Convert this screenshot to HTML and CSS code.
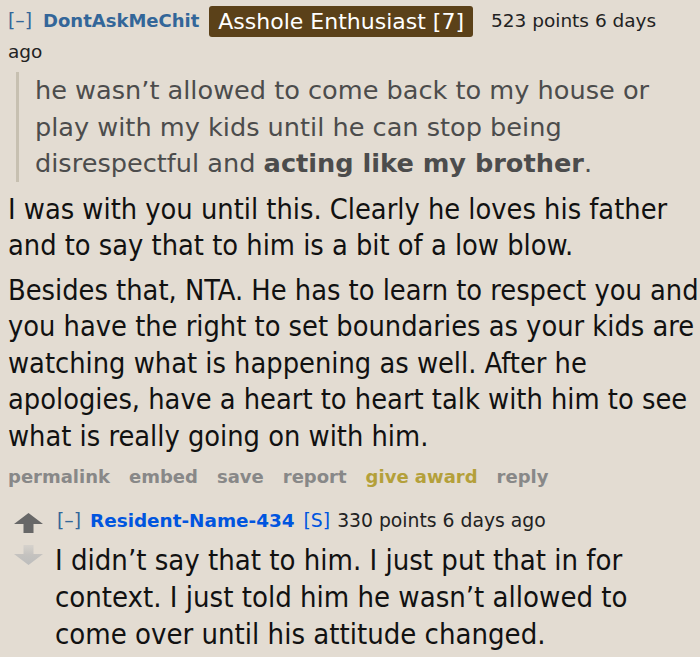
FILE: index.html
```html
<!DOCTYPE html>
<html>
<head>
<meta charset="utf-8">
<link rel="stylesheet" href="styles.css">
</head>
<body>
<div class="comment">
  <p class="tagline"><span class="expand">[–]</span><span class="author">DontAskMeChit</span><span class="flair">Asshole Enthusiast [7]</span><span class="score">523 points 6 days ago</span></p>
  <blockquote class="quote">
    he wasn’t allowed to come back to my house or play with my kids until he can stop being disrespectful and <strong>acting like my brother</strong>.
  </blockquote>
  <div class="md">
    <p>I was with you until this. Clearly he loves his father and to say that to him is a bit of a low blow.</p>
    <p>Besides that, NTA. He has to learn to respect you and you have the right to set boundaries as your kids are watching what is happening as well. After he apologies, have a heart to heart talk with him to see what is really going on with him.</p>
  </div>
  <ul class="buttons">
    <li>permalink</li>
    <li>embed</li>
    <li>save</li>
    <li>report</li>
    <li class="award">give award</li>
    <li>reply</li>
  </ul>
  <div class="child">
    <div class="arrows">
      <svg class="arrow up" width="29" height="20" viewBox="0 0 29 20"><path d="M14.5 0 L29 11 L19.5 11 L19.5 20 L9.5 20 L9.5 11 L0 11 Z"/></svg>
      <svg class="arrow down" width="29" height="20" viewBox="0 0 29 20">
        <defs>
          <linearGradient id="dg" x1="0" y1="0" x2="0" y2="1">
            <stop offset="0" stop-color="#d6d2cc"/>
            <stop offset="0.5" stop-color="#c4c2bf"/>
            <stop offset="1" stop-color="#bdbdbd"/>
          </linearGradient>
        </defs>
        <path fill="url(#dg)" d="M14.5 20 L29 9 L19.5 9 L19.5 0 L9.5 0 L9.5 9 L0 9 Z"/>
      </svg>
    </div>
    <div class="entry">
      <p class="tagline small"><span class="expand">[–]</span><span class="author op">Resident-Name-434</span><span class="sub">[S]</span><span class="score">330 points 6 days ago</span></p>
      <div class="md">
        <p>I didn’t say that to him. I just put that in for context. I just told him he wasn’t allowed to come over until his attitude changed.</p>
      </div>
    </div>
  </div>
</div>
</body>
</html>
```

FILE: styles.css
```css
html, body {
  margin: 0;
  padding: 0;
  background: #e3dcd2;
}
body {
  font-family: "DejaVu Sans", Verdana, sans-serif;
  color: #222;
  width: 700px;
  height: 657px;
  overflow: hidden;
}
.comment {
  padding: 6px 0 0 8px;
}
.tagline {
  margin: 0;
  font-size: 18.8px;
  line-height: 30px;
  color: #222;
  width: 665px;
}
.expand {
  color: #369;
}
.author {
  color: #369;
  font-weight: bold;
  font-size: 18px;
  margin-left: 11px;
}
.flair {
  display: inline-block;
  background: #5b4119;
  color: #fff;
  font-size: 22px;
  line-height: 31px;
  padding: 0 9px;
  border-radius: 3px;
  margin: 0 18px 0 10px;
  vertical-align: top;
}
.score {
  font-size: 18.5px;
}
.quote {
  margin: 5px 0 0 8px;
  padding: 0 0 0 16px;
  border-left: 3px solid #c7c0b1;
  font-size: 25.6px;
  line-height: 36.5px;
  color: #4c4c4c;
}
.md {
  font-family: "DejaVu Sans Condensed", Tahoma, sans-serif;
  font-size: 28.7px;
  line-height: 36.6px;
  color: #111;
  width: 695px;
}
.md p {
  margin: 9px 0 0 0;
}
.md p + p {
  margin-top: 8px;
}
.buttons {
  list-style: none;
  margin: 10px 0 0 0;
  padding: 0;
  display: flex;
  gap: 19px;
  font-size: 18px;
  font-weight: bold;
  color: #888;
  line-height: 24px;
}
.buttons .award {
  color: #b4a03a;
}
.child {
  display: flex;
  margin-top: 19px;
}
.arrows {
  display: flex;
  flex-direction: column;
  gap: 12px;
  width: 47px;
  padding-top: 5px;
  padding-left: 6px;
  box-sizing: border-box;
}
.arrow.up path { fill: #676767; }
.tagline.small {
  font-size: 18.8px;
  line-height: 26px;
  padding-left: 2px;
  width: auto;
}
.tagline.small .author {
  font-size: 18.4px;
  margin-left: 9px;
}
.tagline.small .score {
  font-size: 18.8px;
  margin-left: 7px;
}
.op {
  color: #0055df;
}
.sub {
  color: #0055df;
  margin-left: 9px;
}
.child .md {
  width: 645px;
  font-size: 29px;
}
.child .md p {
  margin: 8px 0 0 0;
  line-height: 37px;
}
```
